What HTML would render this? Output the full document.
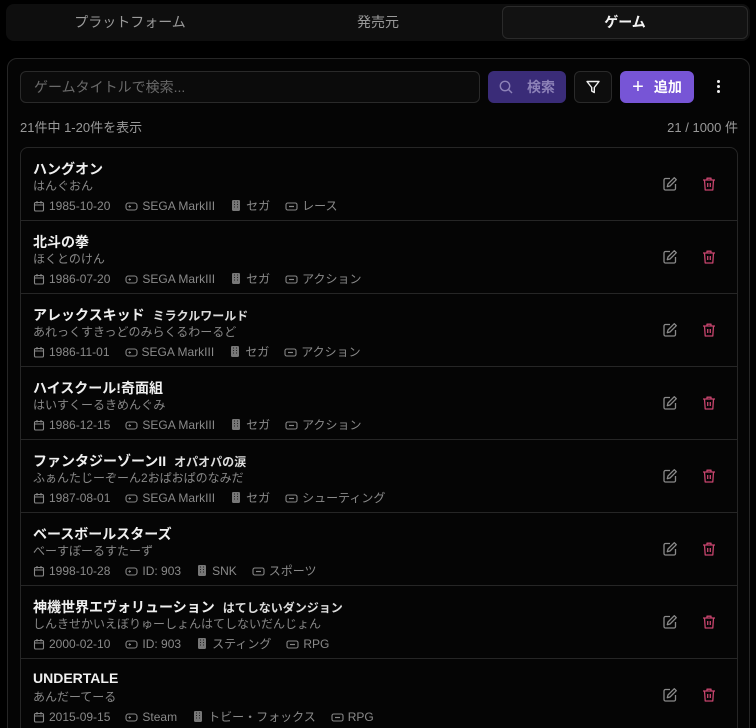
<!DOCTYPE html>
<html style="width:756px;height:728px;overflow:hidden"><head><meta charset="utf-8"><style>
*{box-sizing:border-box;margin:0;padding:0}
body{width:756px;height:728px;overflow:hidden;background:#000;font-family:"Liberation Sans","Noto Sans CJK JP",sans-serif;color:#eee;position:relative}
.tabs{position:absolute;left:6px;top:4px;width:744px;height:37px;background:#0e0e0e;border-radius:8px}
.tab{position:absolute;top:2px;height:33px;line-height:33px;text-align:center;font-size:14px;color:#9a9a9a}
.tab.on{background:#121212;border:1px solid #2a2a2a;border-radius:6px;color:#f2f2f2;font-weight:bold;line-height:31px}
.panel{position:absolute;left:7px;top:58px;width:743px;height:690px;border:1px solid #262626;border-radius:10px;background:#050505}
.input{position:absolute;left:20px;top:71px;width:460px;height:32px;border:1px solid #2a2a2a;border-radius:6px;background:#0b0b0b;font-size:14px;color:#6a6a6a;line-height:30px;padding-left:13px}
.btn{position:absolute;top:71px;height:32px;border-radius:6px;font-size:14px;font-weight:bold;display:flex;align-items:center;justify-content:center}
.count{position:absolute;top:117px;font-size:13px;color:#999}
.list{position:absolute;left:20px;top:147px;width:718px;height:600px;border:1px solid #262626;border-radius:8px;overflow:hidden}
.row{height:73px;border-bottom:1px solid #262626;position:relative;padding-left:12px}
.t{position:absolute;top:11px;left:12px;font-size:14px;font-weight:bold;color:#f0f0f0;white-space:nowrap}
.t small{font-size:12px;margin-left:8px;color:#ddd}
.s{position:absolute;top:29px;left:12px;font-size:12px;color:#888;white-space:nowrap}
.m{position:absolute;top:49px;left:12px;font-size:12px;color:#8a8a8a;display:flex;gap:15px;white-space:nowrap}
.m span{display:flex;align-items:center;gap:4px}
.m svg{flex:none}
.ed{position:absolute;left:641px;top:28px}
.dl{position:absolute;left:680px;top:28px}
</style></head><body>
<div class="tabs">
<div class="tab" style="left:0;width:248px">プラットフォーム</div>
<div class="tab" style="left:248px;width:248px">発売元</div>
<div class="tab on" style="left:496px;width:246px">ゲーム</div>
</div>
<div class="panel"></div>
<div class="input">ゲームタイトルで検索...</div>
<div class="btn" style="left:488px;width:78px;background:#3a2c78;color:#8d82b8;gap:14px"><svg width="14" height="14" viewBox="0 0 14 14" fill="none" stroke="#8d82b8" stroke-width="1.4"><circle cx="6" cy="6" r="4.7"/><path d="M9.5 9.5L13 13"/></svg>検索</div>
<div class="btn" style="left:574px;width:38px;background:#0d0d0d;border:1px solid #2a2a2a"><svg width="14" height="14" viewBox="0 0 14 14" fill="none" stroke="#eee" stroke-width="1.4" stroke-linejoin="round"><path d="M1 1.5h12L8.3 7.5v5L5.7 11V7.5z"/></svg></div>
<div class="btn" style="left:620px;width:74px;background:#7755d6;color:#fff;gap:10px"><span style="font-size:20px;font-weight:normal;line-height:1">+</span>追加</div>
<div style="position:absolute;left:717px;top:80px;width:4px"><div style="width:3px;height:3px;background:#eee;border-radius:2px;margin-bottom:2px"></div><div style="width:3px;height:3px;background:#eee;border-radius:2px;margin-bottom:2px"></div><div style="width:3px;height:3px;background:#eee;border-radius:2px"></div></div>
<div class="count" style="left:20px">21件中 1-20件を表示</div>
<div class="count" style="right:18px">21 / 1000 件</div>

<div class="list" id="l">
<svg width="0" height="0" style="position:absolute"><defs>
<g id="cal"><rect x="1.5" y="2.5" width="9" height="8.5" rx="1.3" fill="none" stroke="#888" stroke-width="1.1"/><path d="M1.5 5h9M4 1v2.5M8 1v2.5" stroke="#888" stroke-width="1.1"/></g>
<g id="pad"><rect x="1" y="3" width="11" height="7" rx="2.5" fill="none" stroke="#888" stroke-width="1.1"/><path d="M3.5 6.5h2.5M4.7 5.3v2.4" stroke="#888" stroke-width="1"/></g>
<g id="bld"><rect x="2" y="1" width="8" height="11" rx="1.2" fill="#777"/><path d="M4 3h1M7 3h1M4 5.5h1M7 5.5h1M4 8h1M7 8h1" stroke="#222" stroke-width="1"/></g>
<g id="tag"><rect x="1" y="3" width="11" height="7" rx="1.8" fill="none" stroke="#888" stroke-width="1.1"/><path d="M4 6.5h5" stroke="#888" stroke-width="1.2"/></g>
<g id="edit"><path d="M8 2.5H3.5a1.5 1.5 0 0 0-1.5 1.5v8.5a1.5 1.5 0 0 0 1.5 1.5H12a1.5 1.5 0 0 0 1.5-1.5V8" fill="none" stroke="#8a8a8a" stroke-width="1.3"/><path d="M12.3 1.7l2 2-6.3 6.3-2.7.7.7-2.7z" fill="none" stroke="#8a8a8a" stroke-width="1.3" stroke-linejoin="round"/></g>
<g id="del"><path d="M2 4h12M6 4V2.2h4V4M3.5 4l.7 10h7.6l.7-10M6.7 7v4M9.3 7v4" fill="none" stroke="#c8456e" stroke-width="1.3" stroke-linejoin="round"/></g>
</defs></svg>

<div class="row"><div class="t">ハングオン</div><div class="s">はんぐおん</div><div class="m"><span><svg width="12" height="12"><use href="#cal"/></svg>1985-10-20</span><span><svg width="13" height="12"><use href="#pad"/></svg>SEGA MarkIII</span><span><svg width="12" height="13"><use href="#bld"/></svg>セガ</span><span><svg width="13" height="12"><use href="#tag"/></svg>レース</span></div><svg class="ed" width="16" height="16"><use href="#edit"/></svg><svg class="dl" width="16" height="16"><use href="#del"/></svg></div>

<div class="row"><div class="t">北斗の拳</div><div class="s">ほくとのけん</div><div class="m"><span><svg width="12" height="12"><use href="#cal"/></svg>1986-07-20</span><span><svg width="13" height="12"><use href="#pad"/></svg>SEGA MarkIII</span><span><svg width="12" height="13"><use href="#bld"/></svg>セガ</span><span><svg width="13" height="12"><use href="#tag"/></svg>アクション</span></div><svg class="ed" width="16" height="16"><use href="#edit"/></svg><svg class="dl" width="16" height="16"><use href="#del"/></svg></div>

<div class="row"><div class="t">アレックスキッド<small>ミラクルワールド</small></div><div class="s">あれっくすきっどのみらくるわーるど</div><div class="m"><span><svg width="12" height="12"><use href="#cal"/></svg>1986-11-01</span><span><svg width="13" height="12"><use href="#pad"/></svg>SEGA MarkIII</span><span><svg width="12" height="13"><use href="#bld"/></svg>セガ</span><span><svg width="13" height="12"><use href="#tag"/></svg>アクション</span></div><svg class="ed" width="16" height="16"><use href="#edit"/></svg><svg class="dl" width="16" height="16"><use href="#del"/></svg></div>

<div class="row"><div class="t">ハイスクール!奇面組</div><div class="s">はいすくーるきめんぐみ</div><div class="m"><span><svg width="12" height="12"><use href="#cal"/></svg>1986-12-15</span><span><svg width="13" height="12"><use href="#pad"/></svg>SEGA MarkIII</span><span><svg width="12" height="13"><use href="#bld"/></svg>セガ</span><span><svg width="13" height="12"><use href="#tag"/></svg>アクション</span></div><svg class="ed" width="16" height="16"><use href="#edit"/></svg><svg class="dl" width="16" height="16"><use href="#del"/></svg></div>

<div class="row"><div class="t">ファンタジーゾーンII<small>オパオパの涙</small></div><div class="s">ふぁんたじーぞーん2おぱおぱのなみだ</div><div class="m"><span><svg width="12" height="12"><use href="#cal"/></svg>1987-08-01</span><span><svg width="13" height="12"><use href="#pad"/></svg>SEGA MarkIII</span><span><svg width="12" height="13"><use href="#bld"/></svg>セガ</span><span><svg width="13" height="12"><use href="#tag"/></svg>シューティング</span></div><svg class="ed" width="16" height="16"><use href="#edit"/></svg><svg class="dl" width="16" height="16"><use href="#del"/></svg></div>

<div class="row"><div class="t">ベースボールスターズ</div><div class="s">べーすぼーるすたーず</div><div class="m"><span><svg width="12" height="12"><use href="#cal"/></svg>1998-10-28</span><span><svg width="13" height="12"><use href="#pad"/></svg>ID: 903</span><span><svg width="12" height="13"><use href="#bld"/></svg>SNK</span><span><svg width="13" height="12"><use href="#tag"/></svg>スポーツ</span></div><svg class="ed" width="16" height="16"><use href="#edit"/></svg><svg class="dl" width="16" height="16"><use href="#del"/></svg></div>

<div class="row"><div class="t">神機世界エヴォリューション<small>はてしないダンジョン</small></div><div class="s">しんきせかいえぼりゅーしょんはてしないだんじょん</div><div class="m"><span><svg width="12" height="12"><use href="#cal"/></svg>2000-02-10</span><span><svg width="13" height="12"><use href="#pad"/></svg>ID: 903</span><span><svg width="12" height="13"><use href="#bld"/></svg>スティング</span><span><svg width="13" height="12"><use href="#tag"/></svg>RPG</span></div><svg class="ed" width="16" height="16"><use href="#edit"/></svg><svg class="dl" width="16" height="16"><use href="#del"/></svg></div>

<div class="row"><div class="t">UNDERTALE</div><div class="s">あんだーてーる</div><div class="m"><span><svg width="12" height="12"><use href="#cal"/></svg>2015-09-15</span><span><svg width="13" height="12"><use href="#pad"/></svg>Steam</span><span><svg width="12" height="13"><use href="#bld"/></svg>トビー・フォックス</span><span><svg width="13" height="12"><use href="#tag"/></svg>RPG</span></div><svg class="ed" width="16" height="16"><use href="#edit"/></svg><svg class="dl" width="16" height="16"><use href="#del"/></svg></div>
</div>
</body></html>
